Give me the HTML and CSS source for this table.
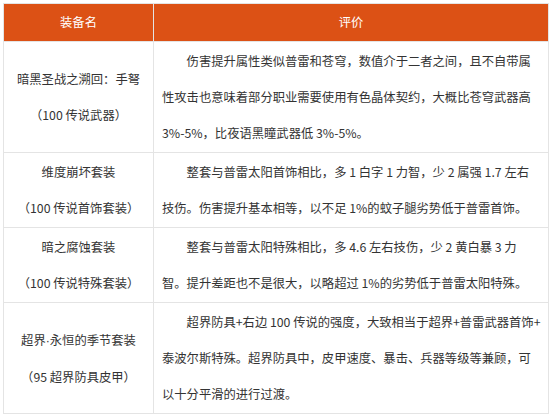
FILE: index.html
```html
<!DOCTYPE html>
<html lang="zh-CN">
<head>
<meta charset="utf-8">
<link rel="stylesheet" href="styles.css">
</head>
<body>
<div class="wrap">
<table class="gear">
  <colgroup><col class="c-name"><col class="c-eval"></colgroup>
  <thead>
    <tr><th>装备名</th><th>评价</th></tr>
  </thead>
  <tbody>
    <tr>
      <td class="name">暗黑圣战之溯回：手弩<br>（100 传说武器）</td>
      <td class="eval"><p><span class="ln first">伤害提升属性类似普雷和苍穹，数值介于二者之间，且不自带属</span><span class="ln">性攻击也意味着部分职业需要使用有色晶体契约，大概比苍穹武器高</span><span class="ln">3%-5%，比夜语黑瞳武器低 3%-5%。</span></p></td>
    </tr>
    <tr>
      <td class="name">维度崩坏套装<br>（100 传说首饰套装）</td>
      <td class="eval"><p><span class="ln first">整套与普雷太阳首饰相比，多 1 白字 1 力智，少 2 属强 1.7 左右</span><span class="ln">技伤。伤害提升基本相等，以不足 1%的蚊子腿劣势低于普雷首饰。</span></p></td>
    </tr>
    <tr>
      <td class="name">暗之腐蚀套装<br>（100 传说特殊套装）</td>
      <td class="eval"><p><span class="ln first">整套与普雷太阳特殊相比，多 4.6 左右技伤，少 2 黄白暴 3 力</span><span class="ln">智。提升差距也不是很大，以略超过 1%的劣势低于普雷太阳特殊。</span></p></td>
    </tr>
    <tr>
      <td class="name">超界<span class="dot">·</span>永恒的季节套装<br>（95 超界防具皮甲）</td>
      <td class="eval"><p><span class="ln first">超界防具+右边 100 传说的强度，大致相当于超界+普雷武器首饰+</span><span class="ln">泰波尔斯特殊。超界防具中，皮甲速度、暴击、兵器等级等兼顾，可</span><span class="ln">以十分平滑的进行过渡。</span></p></td>
    </tr>
  </tbody>
</table>
</div>
</body>
</html>
```

FILE: styles.css
```css
html, body {
  margin: 0;
  padding: 0;
  background: #ffffff;
}
.wrap {
  padding: 3px 0 0 3px;
}
.gear {
  width: 545px;
  border-collapse: collapse;
  table-layout: fixed;
  font-family: "Noto Sans CJK SC", "Microsoft YaHei", sans-serif;
  font-size: 12.3px;
  color: #333333;
}
.c-name { width: 150px; }
.c-eval { width: 395px; }
.gear th {
  background: #dc5115;
  color: #ffffff;
  font-weight: normal;
  line-height: 35px;
  padding: 1px 8px;
  border: 1px solid #e4e4e4;
  text-align: center;
}
.gear td {
  border: 1px solid #e4e4e4;
  padding: 1px 8px;
  line-height: 36px;
  vertical-align: middle;
}
.gear td.name {
  text-align: center;
}
.gear td.eval p {
  margin: 0;
}
.ln {
  display: block;
  white-space: nowrap;
}
.ln.first {
  text-indent: 2em;
}
.dot {
  font-family: "Liberation Sans", Arial, sans-serif;
}
```
